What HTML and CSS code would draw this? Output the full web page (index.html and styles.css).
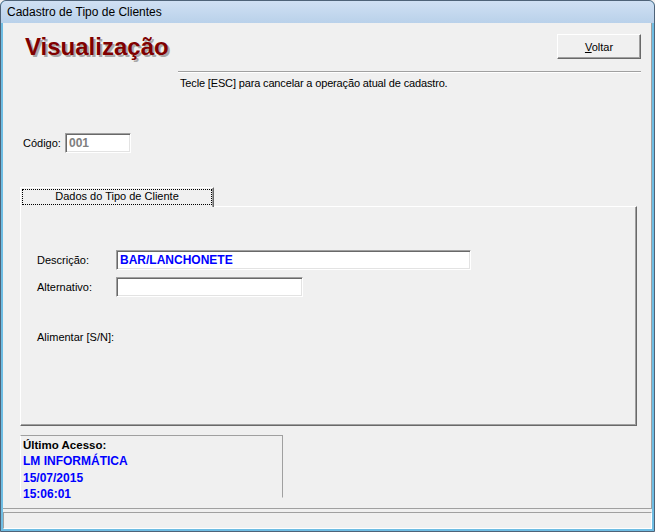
FILE: index.html
```html
<!DOCTYPE html>
<html lang="pt-BR">
<head>
    <meta charset="UTF-8">
    <title>Cadastro de Tipo de Clientes</title>
    <link rel="stylesheet" href="styles.css">
</head>
<body>
    <div class="window">
        <div class="titlebar">Cadastro de Tipo de Clientes</div>

        <div class="client">
            <div class="form">
                <div class="header">
                    <h1 class="mode">Visualização</h1>
                    <button class="btn"><u>V</u>oltar</button>
                </div>

                <div class="rule"></div>
                <p class="hint">Tecle [ESC] para cancelar a operação atual de cadastro.</p>

                <div class="code-row">
                    <span class="label">Código:</span>
                    <div class="edit edit-code">001</div>
                </div>

                <div class="tabs">
                    <div class="tab"><span class="tab-label">Dados do Tipo de Cliente</span></div>
                </div>

                <div class="page">
                    <div class="row">
                        <span class="label label-wide">Descrição:</span>
                        <div class="edit edit-desc">BAR/LANCHONETE</div>
                    </div>
                    <div class="row row-gap">
                        <span class="label label-wide">Alternativo:</span>
                        <div class="edit edit-alt"></div>
                    </div>
                    <div class="row-text">
                        <span class="label">Alimentar [S/N]:</span>
                    </div>
                </div>

                <div class="access">
                    <div class="access-title">Último Acesso:</div>
                    <div class="access-value">LM INFORMÁTICA</div>
                    <div class="access-value">15/07/2015</div>
                    <div class="access-value">15:06:01</div>
                </div>
            </div>

            <div class="status">
                <div class="status-panel"></div>
            </div>
        </div>
    </div>
</body>
</html>
```

FILE: styles.css
```css
* {
    margin: 0;
    padding: 0;
    box-sizing: border-box;
}

body {
    font-family: 'Liberation Sans', Arial, sans-serif;
    font-size: 11px;
    color: #000;
    background: #f0f0f0;
}

.window {
    width: 655px;
    height: 532px;
    display: flex;
    flex-direction: column;
    border: 1px solid #4f6378;
    border-radius: 6px 6px 0 0;
    padding: 0 2px 2px 2px;
    background: #6fbde3;
    overflow: hidden;
}

.titlebar {
    height: 22px;
    margin: 0 -2px;
    padding: 1px 0 0 6px;
    line-height: 21px;
    font-size: 12px;
    background: linear-gradient(to bottom, #d0e0f3, #b9d1ea);
    border-radius: 5px 5px 0 0;
}

.client {
    flex: 1;
    display: flex;
    flex-direction: column;
    background: #f0f0f0;
}

.form {
    flex: 1;
    border-right: 1px solid #a0a0a0;
    border-bottom: 1px solid #a0a0a0;
}

.header {
    display: flex;
    justify-content: space-between;
    align-items: flex-start;
    padding: 11px 10px 0 22px;
}

.mode {
    font-size: 24px;
    line-height: 26px;
    font-weight: bold;
    color: #800000;
    text-shadow: 2px 2px 0 #a8a8a8;
}

.btn {
    width: 84px;
    height: 25px;
    font-family: inherit;
    font-size: 11px;
    color: #000;
    background: #f0f0f0;
    border: 1px solid;
    border-color: #fff #696969 #696969 #fff;
    box-shadow: inset -1px -1px 0 #a0a0a0;
}

.rule {
    margin: 11px 10px 0 175px;
    height: 2px;
    border-top: 1px solid #a0a0a0;
    border-bottom: 1px solid #fff;
}

.hint {
    margin: 4px 0 0 177px;
    line-height: 13px;
    letter-spacing: -0.15px;
}

.code-row {
    display: flex;
    align-items: center;
    margin: 43px 0 0 20px;
}

.code-row .label {
    width: 42px;
}

.edit {
    height: 20px;
    padding: 0 3px;
    line-height: 18px;
    font-size: 12px;
    font-weight: bold;
    background: #fff;
    border: 1px solid;
    border-color: #a0a0a0 #fff #fff #a0a0a0;
    box-shadow: inset 1px 1px 0 #696969, inset -1px -1px 0 #e3e3e3;
}

.edit-code {
    width: 66px;
    color: #808080;
}

.edit-desc {
    width: 355px;
    color: #0000ff;
}

.edit-alt {
    width: 187px;
}

.tabs {
    display: flex;
    margin: 34px 0 0 17px;
}

.tab {
    position: relative;
    z-index: 1;
    height: 20px;
    margin-bottom: -1px;
    padding: 1px 0 2px 1px;
    background: #f0f0f0;
    border-top: 1px solid #fff;
    border-left: 1px solid #fff;
    border-right: 1px solid #696969;
    box-shadow: inset -1px 0 0 #a0a0a0;
}

.tab-label {
    display: block;
    width: 190px;
    height: 16px;
    margin-right: 1px;
    border: 1px dotted #000;
    text-align: center;
    line-height: 12px;
}

.page {
    width: 617px;
    height: 220px;
    margin-left: 17px;
    padding: 43px 0 0 16px;
    border: 1px solid;
    border-color: #fff #696969 #696969 #fff;
    box-shadow: inset -1px -1px 0 #a0a0a0;
}

.row {
    display: flex;
    align-items: center;
}

.row-gap {
    margin-top: 7px;
}

.label-wide {
    width: 79px;
}

.row-text {
    margin-top: 34px;
    line-height: 13px;
}

.access {
    width: 263px;
    height: 63px;
    margin: 9px 0 0 17px;
    padding: 1px 0 0 2px;
    border: 1px solid;
    border-color: #a0a0a0 #a0a0a0 transparent #fff;
    font-size: 12px;
    font-weight: bold;
    line-height: 16.4px;
}

.access-title {
    font-size: 11.5px;
}

.access-value {
    color: #0000ff;
}

.status {
    height: 20px;
    padding-top: 3px;
}

.status-panel {
    height: 17px;
    border: 1px solid;
    border-color: #a0a0a0 #fff #fff #a0a0a0;
}
```
